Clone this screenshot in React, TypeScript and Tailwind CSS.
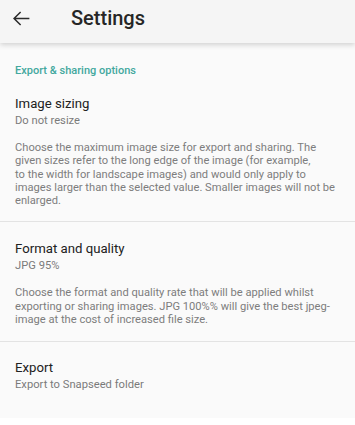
import React from "react";

function Item({ title, subtitle, desc, divider, pt, pb }: { title: string; subtitle: string; desc?: React.ReactNode; divider?: boolean; pt: string; pb: string }) {
  return (
    <div className={`${pt} ${pb} pl-[15px] pr-[12px] ${divider ? "border-b border-[#e3e3e3]" : ""}`}>
      <div className="text-[13.2px] leading-[18px] text-[#212121]">{title}</div>
      <div className="text-[11.2px] leading-[16px] text-[#7a7a7a]">{subtitle}</div>
      {desc && (
        <div className="mt-[12px] text-[11.15px] leading-[13.3px] text-[#7d7d7d]">{desc}</div>
      )}
    </div>
  );
}

export default function App() {
  return (
    <div className="w-[355px] h-[425px] bg-white flex flex-col overflow-hidden" style={{ fontFamily: "Roboto, 'Noto Sans', sans-serif" }}>
      <div className="h-[43px] shrink-0 bg-[#f5f5f5] flex items-start pt-[8px] relative z-10 shadow-[0_2px_5px_rgba(0,0,0,0.16)]">
        <div className="pl-[11px] w-[71px] h-[20px] flex items-center">
          <svg width="21" height="21" viewBox="0 0 24 24" fill="none" stroke="#2a2a2a" strokeWidth="1.7">
            <path d="M21 12H3.5M11 4.5L3.5 12l7.5 7.5" />
          </svg>
        </div>
        <div className="text-[20px] leading-[20px] font-medium text-[#262626]">Settings</div>
      </div>
      <div className="h-[375px] shrink-0 bg-[#fafafa]">
        <div className="pt-[20px] px-[15px] text-[11px] leading-[16px] font-medium text-[#43a89e]">Export &amp; sharing options</div>
        <Item
          pt="pt-[16px]"
          pb="pb-[14px]"
          divider
          title="Image sizing"
          subtitle="Do not resize"
          desc={
            <>
              Choose the maximum image size for export and sharing. The given sizes refer to the long edge of the image (for example,
              <br />
              to the width for landscape images) and would only apply to images larger than the selected value. Smaller images will not be enlarged.
            </>
          }
        />
        <Item
          pt="pt-[18px]"
          pb="pb-[15px]"
          divider
          title="Format and quality"
          subtitle="JPG 95%"
          desc="Choose the format and quality rate that will be applied whilst exporting or sharing images. JPG 100%% will give the best jpeg-image at the cost of increased file size."
        />
        <Item pt="pt-[17px]" pb="pb-[0px]" title="Export" subtitle="Export to Snapseed folder" />
      </div>
    </div>
  );
}
